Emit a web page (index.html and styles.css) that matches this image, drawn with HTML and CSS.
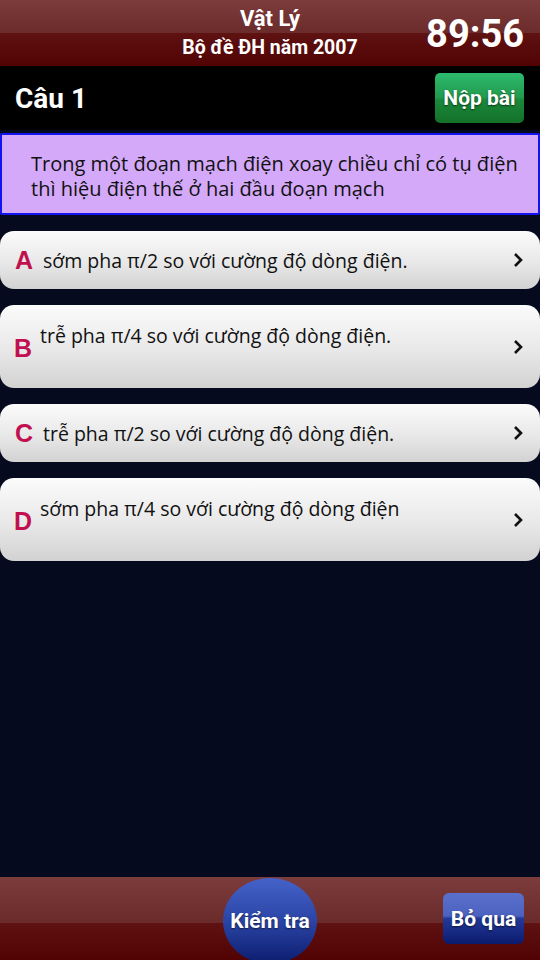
FILE: index.html
```html
<!DOCTYPE html>
<html>
<head>
  <meta charset="utf-8">
  <title>Vật Lý - Bộ đề ĐH năm 2007</title>
  <link rel="stylesheet" href="styles.css">
</head>
<body>
  <div class="screen">
    <header class="app-header">
      <div class="titles">
        <div class="subject">Vật Lý</div>
        <div class="exam">Bộ đề ĐH năm 2007</div>
      </div>
      <div class="timer">89:56</div>
    </header>

    <div class="question-bar">
      <span class="question-no">Câu 1</span>
      <button class="submit-btn">Nộp bài</button>
    </div>

    <div class="question">
      Trong một đoạn mạch điện xoay chiều chỉ có tụ điện thì hiệu điện thế ở hai đầu đoạn mạch
    </div>

    <div class="answers">
      <div class="answer">
        <span class="letter">A</span>
        <span class="answer-text">sớm pha π/2 so với cường độ dòng điện.</span>
        <svg class="chevron" viewBox="0 0 12 16" width="12" height="16"><path d="M3 2 L9 8 L3 14" fill="none" stroke="#111" stroke-width="2.6"/></svg>
      </div>
      <div class="answer tall">
        <span class="letter">B</span>
        <span class="answer-text">trễ pha π/4 so với cường độ dòng điện.</span>
        <svg class="chevron" viewBox="0 0 12 16" width="12" height="16"><path d="M3 2 L9 8 L3 14" fill="none" stroke="#111" stroke-width="2.6"/></svg>
      </div>
      <div class="answer">
        <span class="letter">C</span>
        <span class="answer-text">trễ pha π/2 so với cường độ dòng điện.</span>
        <svg class="chevron" viewBox="0 0 12 16" width="12" height="16"><path d="M3 2 L9 8 L3 14" fill="none" stroke="#111" stroke-width="2.6"/></svg>
      </div>
      <div class="answer tall">
        <span class="letter">D</span>
        <span class="answer-text">sớm pha π/4 so với cường độ dòng điện</span>
        <svg class="chevron" viewBox="0 0 12 16" width="12" height="16"><path d="M3 2 L9 8 L3 14" fill="none" stroke="#111" stroke-width="2.6"/></svg>
      </div>
    </div>

    <footer class="app-footer">
      <button class="check-btn">Kiểm tra</button>
      <button class="skip-btn">Bỏ qua</button>
    </footer>
  </div>
</body>
</html>
```

FILE: styles.css
```css
/* Quiz screen */
body {
  margin: 0;
  background-color: #050a1e;
  font-family: Roboto, "Noto Sans", sans-serif;
}
.screen {
  width: 540px;
  height: 960px;
  display: flex;
  flex-direction: column;
  overflow: hidden;
}
button {
  font-family: Roboto, "Noto Sans", sans-serif;
  border: none;
  color: #fff;
  font-weight: bold;
  text-shadow: 0 1px 2px rgba(0,0,0,0.6);
  padding: 0;
  cursor: pointer;
}

/* header */
.app-header {
  height: 66px;
  display: flex;
  align-items: center;
  color: #fff;
  background: linear-gradient(to bottom, #7c3c3c 0%, #6c2b2b 50%, #5f1212 50%, #520202 100%);
  position: relative;
}
.titles {
  flex: 1;
  text-align: center;
  font-weight: bold;
  margin-top: 2px;
}
.subject {
  font-size: 22px;
  line-height: 28px;
}
.exam {
  font-size: 19.5px;
  line-height: 30px;
}
.timer {
  position: absolute;
  right: 16px;
  top: 12px;
  font-size: 38px;
  font-weight: bold;
  line-height: 44px;
}

/* question number bar */
.question-bar {
  background-color: #000;
  height: 64px;
  display: flex;
  align-items: center;
  justify-content: space-between;
  padding: 0 16px 0 15px;
}
.question-no {
  color: #fff;
  font-size: 28px;
  font-weight: bold;
  margin-top: 1px;
}
.submit-btn {
  width: 89px;
  height: 50px;
  border-radius: 5px;
  font-size: 21px;
  background: linear-gradient(to bottom, #2dbb6f 0%, #21994c 50%, #1a8a3c 52%, #147028 100%);
}

/* question text */
.question {
  margin-top: 3px;
  height: 82px;
  box-sizing: border-box;
  background-color: #d4a9f9;
  border: 2px solid #1414f2;
  border-radius: 2px;
  padding: 16px 10px 0 29px;
  font-family: "Open Sans", Roboto, sans-serif;
  font-size: 20px;
  line-height: 25px;
  color: #111;
}

/* answers */
.answers {
  margin-top: 16px;
  display: flex;
  flex-direction: column;
  gap: 16px;
}
.answer {
  height: 58px;
  display: flex;
  align-items: center;
  border-radius: 14px;
  background: linear-gradient(to bottom, #fbfbfb 0%, #e8e8e8 55%, #d2d2d2 100%);
  padding: 0 16px 0 15px;
}
.answer.tall {
  height: 83px;
  padding-left: 14px;
}
.letter {
  color: #c1104f;
  font-family: "Liberation Sans", Arial, sans-serif;
  font-weight: bold;
  font-size: 25px;
  width: 28px;
}
.tall .letter {
  width: 26px;
  margin-top: 4px;
}
.answer-text {
  flex: 1;
  font-family: "Open Sans", Roboto, sans-serif;
  font-size: 19.5px;
  color: #111;
}
.tall .answer-text {
  align-self: flex-start;
  margin-top: 17px;
}

/* footer */
.app-footer {
  margin-top: auto;
  height: 83px;
  display: flex;
  align-items: center;
  padding: 0 16px 0 223px;
  background: linear-gradient(to bottom, #7c3c3c 0%, #6c2b2b 55%, #5f1212 55%, #520202 100%);
}
.check-btn {
  width: 94px;
  height: 86px;
  margin-top: 4px;
  border-radius: 50%;
  font-size: 21px;
  background: linear-gradient(to bottom, #4462c9 0%, #2b45a6 50%, #0b1c6d 100%);
}
.skip-btn {
  margin-left: auto;
  width: 81px;
  height: 51px;
  border-radius: 6px;
  font-size: 21px;
  background: linear-gradient(to bottom, #5b70cc 0%, #4c62c0 45%, #23399a 50%, #0b1a6c 100%);
}
```
